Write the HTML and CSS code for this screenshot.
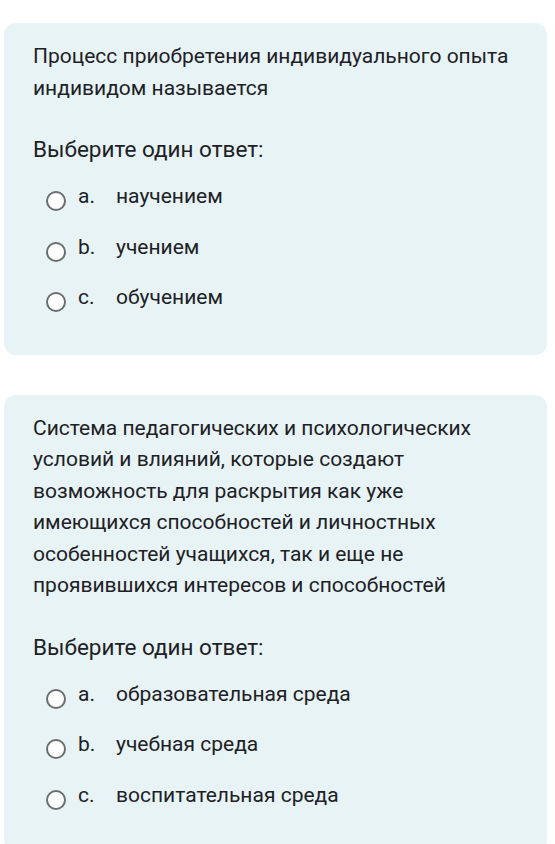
FILE: index.html
```html
<!DOCTYPE html>
<html lang="ru">
<head>
<meta charset="utf-8">
<title>Тест</title>
<link rel="stylesheet" href="styles.css">
</head>
<body>
<main class="quiz">
  <section class="que">
    <div class="qtext">Процесс приобретения индивидуального опыта индивидом называется</div>
    <div class="prompt">Выберите один ответ:</div>
    <div class="answer">
      <label class="opt"><span class="radio"></span><span class="letter">a.</span><span class="text">научением</span></label>
      <label class="opt"><span class="radio"></span><span class="letter">b.</span><span class="text">учением</span></label>
      <label class="opt"><span class="radio"></span><span class="letter">c.</span><span class="text">обучением</span></label>
    </div>
  </section>
  <section class="que">
    <div class="qtext">Система педагогических и психологических условий и влияний, которые создают возможность для раскрытия как уже имеющихся способностей и личностных особенностей учащихся, так и еще не проявившихся интересов и способностей</div>
    <div class="prompt">Выберите один ответ:</div>
    <div class="answer">
      <label class="opt"><span class="radio"></span><span class="letter">a.</span><span class="text">образовательная среда</span></label>
      <label class="opt"><span class="radio"></span><span class="letter">b.</span><span class="text">учебная среда</span></label>
      <label class="opt"><span class="radio"></span><span class="letter">c.</span><span class="text">воспитательная среда</span></label>
    </div>
  </section>
</main>
</body>
</html>
```

FILE: styles.css
```css
html, body {
  margin: 0;
  padding: 0;
  background: #ffffff;
}

body {
  font-family: Roboto, "Noto Sans", "Liberation Sans", sans-serif;
  color: #1d2125;
}

.quiz {
  display: flex;
  flex-direction: column;
  gap: 40px;
  padding: 23px 8px 0 4px;
}

.que {
  background: #e7f3f5;
  border-radius: 12px;
  padding: 18px 29px 32px 29px;
}

.qtext {
  font-size: 21px;
  line-height: 31.5px;
  max-width: 485px;
}

.prompt {
  margin-top: 30px;
  font-size: 22.5px;
  line-height: 30px;
}

.answer {
  margin-top: 7px;
  display: flex;
  flex-direction: column;
}

.opt {
  display: flex;
  align-items: center;
  height: 50.5px;
  padding-left: 13px;
  font-size: 21px;
}

.radio {
  flex: none;
  width: 16px;
  height: 16px;
  border: 2px solid #6b6e70;
  border-radius: 50%;
  background: #ffffff;
  margin-top: 10px;
  margin-right: 12px;
}

.letter {
  width: 38px;
}
```
